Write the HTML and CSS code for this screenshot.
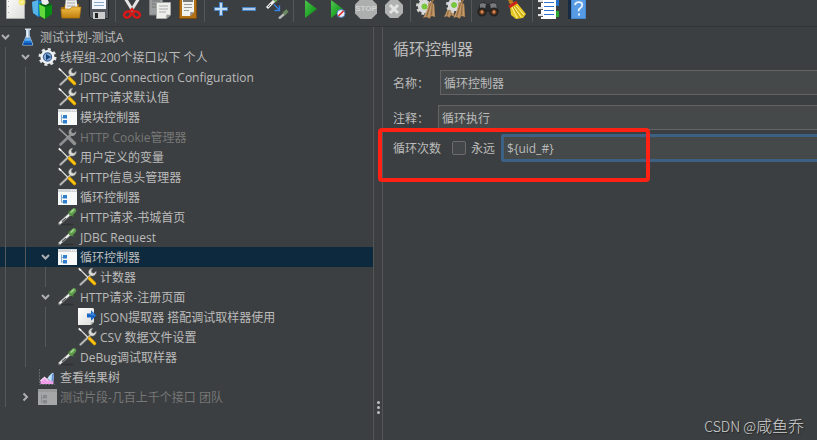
FILE: index.html
```html
<!DOCTYPE html>
<html lang="zh-CN">
<head>
<meta charset="utf-8">
<title>测试计划-测试A</title>
<link rel="stylesheet" href="styles.css">
</head>
<body>
<svg class="defs" aria-hidden="true">
  <defs>
    <linearGradient id="gGreen" x1="0" y1="0" x2="1" y2="1"><stop offset="0" stop-color="#4fc64f"/><stop offset="1" stop-color="#008a0c"/></linearGradient>
    <linearGradient id="gGold" x1="0" y1="0" x2="0" y2="1"><stop offset="0" stop-color="#f2c04a"/><stop offset="1" stop-color="#c07f0c"/></linearGradient>
    <linearGradient id="gPage" x1="0" y1="0" x2="1" y2="1"><stop offset="0" stop-color="#fff"/><stop offset="1" stop-color="#dcdcd8"/></linearGradient>
    <radialGradient id="gGlow"><stop offset="0" stop-color="#fffde0"/><stop offset=".4" stop-color="#f8e75a"/><stop offset="1" stop-color="#f8e75a" stop-opacity="0"/></radialGradient>
  </defs>
  <symbol id="tools" viewBox="0 0 20 20">
    <path d="M2.500 17.500 12 8.500" stroke="#66696b" stroke-width="3" stroke-linecap="round"/>
    <path d="M2.500 17.500 12 8.500" stroke="#c4c5c1" stroke-width="1.600" stroke-linecap="round"/>
    <path d="M14.800 1.200a4 4 0 0 0-3.900 5.600l2 2a4 4 0 0 0 5.300-4.500l-2.300 2-2.200-.6-.5-2.300z" fill="#dddeda" stroke="#8b8c88" stroke-width=".5"/>
    <path d="M2 2.400 10.500 11" stroke="#e0e0dc" stroke-width="1.200"/>
    <path d="M.8 1.400 3 3.600" stroke="#f3f3f0" stroke-width="1.800"/>
    <path d="m11.500 11.500 5 5" stroke="#c88c00" stroke-width="3.600" stroke-linecap="round"/>
    <path d="m11.500 11.500 5 5" stroke="#fcc713" stroke-width="2.400" stroke-linecap="round"/>
  </symbol>
  <symbol id="toolsOff" viewBox="0 0 20 20">
    <path d="M2.500 17.500 12 8.500" stroke="#8b8d8e" stroke-width="2.600" stroke-linecap="round"/>
    <path d="M14.800 1.200a4 4 0 0 0-3.900 5.600l2 2a4 4 0 0 0 5.300-4.500l-2.300 2-2.200-.6-.5-2.300z" fill="#989a9a"/>
    <path d="M1 1.600 11 11" stroke="#999b9b" stroke-width="1.600"/>
    <path d="m11.500 11.500 5 5" stroke="#8f9191" stroke-width="3.400" stroke-linecap="round"/>
  </symbol>
  <symbol id="ctl" viewBox="0 0 20 20">
    <path d="M0 2h19v16H0z" fill="#f8f9f9"/><path d="M0 2h19v3H0z" fill="#d3d6d8"/>
    <path d="M13 3h1v1h-1zM15 3h1v1h-1zM17 3h1v1h-1z" fill="#fff"/>
    <path d="M3.500 7.500v8M3.500 10.500h2M3.500 15h2" fill="none" stroke="#84a9c8"/>
    <path d="M5 8h4v3.500H5zM5 13h4v3.500H5z" fill="#2f7fd0"/>
  </symbol>
  <symbol id="ctlOff" viewBox="0 0 20 20">
    <path d="M0 2h19v16H0z" fill="#a5a6a7"/><path d="M0 2h19v3H0z" fill="#989a9b"/>
    <path d="M3.500 7.500v8M3.500 10.500h2M3.500 15h2" fill="none" stroke="#8a8c8d"/>
    <path d="M5 8h4v3.500H5zM5 13h4v3.500H5z" fill="#85888a"/>
  </symbol>
  <symbol id="dropper" viewBox="0 0 20 20">
    <ellipse cx="9" cy="17.500" rx="7" ry="1" fill="#303334"/>
    <path d="M1.500 16.500 12 7" stroke="#777a7b" stroke-width="3.200" stroke-linecap="round"/>
    <path d="M2 16 12 7" stroke="#f0f0ee" stroke-width="1.800" stroke-linecap="round"/>
    <path d="m4 14.800 4-3.700" stroke="#555859" stroke-width="1.200"/>
    <path d="m10.500 4.500 5 5" stroke="#3f6a35" stroke-width="1.800"/>
    <path d="m13 6.500 3-3" stroke="#5f9a4c" stroke-width="4.600" stroke-linecap="round"/>
    <path d="m13.300 5 2.200-2.200" stroke="#9dd088" stroke-width="1.800" stroke-linecap="round"/>
  </symbol>
  <symbol id="flask" viewBox="0 0 20 20">
    <path d="M8 2.500v6L4.300 17q-.5 1.600 1 1.600h8.800q1.500 0 1-1.600L11.800 8.500v-6z" fill="#a9c3da"/>
    <path d="M7.200 11.500 5 17q-.3 1 .6 1h8.200q.9 0 .6-1l-2.200-5.500z" fill="#176fd0"/>
    <path d="M7.500 12h4.800l.7 1.800H6.800z" fill="#69b5f5"/>
    <path d="M8.500 3H10v7H8.500z" fill="#edf5fb"/><path d="M7 1.500h6v1.500H7z" fill="#d2dde7"/>
    <path d="M5.500 16.300H14v1.200H5.500z" fill="#063f94"/>
  </symbol>
  <symbol id="gear" viewBox="0 0 20 20">
    <circle cx="9.500" cy="10" r="7.700" fill="none" stroke="#e5e7e8" stroke-width="2.600" stroke-dasharray="3 3.050"/>
    <circle cx="9.500" cy="10" r="5.900" fill="#35629b" stroke="#f0f1f2" stroke-width="2.400"/>
    <circle cx="9.500" cy="10" r="3.600" fill="#8dacd0"/>
    <path d="m8 7 5 3-5 3z" fill="#123f78"/>
  </symbol>
  <symbol id="extract" viewBox="0 0 20 20">
    <path d="M0 1h15l1 1v13l-3 3H0z" fill="url(#gPage)"/><path d="m12 18 1-3h3z" fill="#b4b4b0"/>
    <path d="M9 6.500h4V3.300L18.500 8.500 13 13.700v-3.200H9z" fill="#1766c5"/><path d="M9 7.200h5V5l3.200 3.500z" fill="#3f8fe5"/>
  </symbol>
  <symbol id="chart" viewBox="0 0 20 20">
    <path d="M1.500 2v15.500H17" fill="none" stroke="#65686a" stroke-dasharray="2 1"/>
    <path d="M2.500 17v-3.500l4-3 4 3.500 5-6V17z" fill="#ef9ee8"/>
    <path d="M2.500 14l4-3.500 4 3.500" fill="none" stroke="#fbd3f6" stroke-width="1.500"/>
    <path d="M9 12q1.500-3 4-5t2.500-.500V12q-.500 4-3 1.500z" fill="#bfe0f8"/><path d="M14 7q1.500-1 1.500 0v6l-2 2z" fill="#5c8ed2"/>
  </symbol>
  <symbol id="down" viewBox="0 0 12 12"><path d="m2 4 3.500 3.500L9 4" fill="none" stroke="#adafb0" stroke-width="2"/></symbol>
  <symbol id="right" viewBox="0 0 12 12"><path d="m3.500 2.500 3.500 3.500-3.500 3.500" fill="none" stroke="#adafb0" stroke-width="2"/></symbol>
  <symbol id="broom" viewBox="0 0 16 24">
    <path d="m10 7 4-7" stroke="#9f7444" stroke-width="2"/>
    <path d="M7 6l6 2 1 14-4-1-2 3-3-2-4 1q5-7 6-17z" fill="#b18758"/>
    <path d="M8 8 3 22M10 9 7 22M12 9v12" stroke="#d0aa7c" stroke-width=".800"/>
    <path d="M9 8 5 21M11 9l-1 11" stroke="#80592f" stroke-width=".700"/>
  </symbol>
  <symbol id="cog" viewBox="0 0 20 20">
    <circle cx="10" cy="10" r="7.500" fill="none" stroke="#d4d5d5" stroke-width="3" stroke-dasharray="3 2.900"/>
    <circle cx="10" cy="10" r="5" fill="#63b52c" stroke="#d9dada" stroke-width="4"/>
    <circle cx="10" cy="10" r="2.800" fill="#75c93a"/>
  </symbol>
</svg>

<main class="app">
  <header class="toolbar" role="toolbar" aria-label="工具栏">
    <div class="group">
      <button aria-label="新建"><svg viewBox="0 0 24 24"><path d="M3.500 0h18v23.500h-18z" fill="url(#gPage)" stroke="#aaa"/><path d="M5 6h1v1H5zM5 11h1v1H5zM5 17h1v1H5z" fill="#aaa"/><circle cx="19" cy="7" r="4.500" fill="url(#gGlow)"/></svg></button>
      <button aria-label="模板"><svg viewBox="0 0 24 24"><path d="m1 7 6-2 5 2v13l-5 2-5-4z" fill="#1683cc"/><path d="m1 7 6-2v16l-5-3z" fill="#58b4e8"/><path d="m8 9 7-3 6 4v9l-7 5-5-3z" fill="#078d13"/><path d="m8 9 6 3v12l-5-3z" fill="#64db3c"/><path d="m8 9 7-3 6 4-7 2z" fill="#0b5f16"/><path d="M9 0h6l3 8-3 2-4-1z" fill="#eee"/></svg></button>
      <button aria-label="打开"><svg viewBox="0 0 24 24"><path d="M2 12h3l1-3h14v13H3z" fill="#a86c0a"/><path d="m7 0 10 1 2 14H6z" fill="#eee"/><path d="M8 5h8M8 8h8M8 11h8" stroke="#a5a5a5"/><path d="M2 14h9l2-2h9l-1.500 11H3z" fill="url(#gGold)" stroke="#b4780b" stroke-width=".7"/></svg></button>
      <button aria-label="保存"><svg viewBox="0 0 24 24"><path d="M2.500 0h19v23.500H4.500l-2-2z" fill="#555a60" stroke="#26292c"/><path d="M5 0h14v14H5z" fill="#f3f7fb"/><path d="M7 7.500h10M7 10.500h10" stroke="#8aaacc"/><path d="M6 17h12v7H6z" fill="#c9cbcd"/><path d="M8 18h3v5H8z" fill="#222"/></svg></button>
    </div>
    <div class="group">
      <button aria-label="剪切"><svg viewBox="0 0 24 24"><path d="m5 3 8 13M19 3l-8 13" stroke="#e4e4e4" stroke-width="3"/><path d="m12 12 1.500 3" stroke="#888"/><ellipse cx="7.500" cy="19.500" rx="3.500" ry="2.800" fill="none" stroke="#df1717" stroke-width="2.400" transform="rotate(-30 7.500 19.500)"/><ellipse cx="16.500" cy="19.500" rx="3.500" ry="2.800" fill="none" stroke="#df1717" stroke-width="2.400" transform="rotate(30 16.500 19.500)"/><path d="m9 17 3-3 3 3" fill="none" stroke="#df1717" stroke-width="2"/></svg></button>
      <button aria-label="复制"><svg viewBox="0 0 24 24"><path d="M1.500 0h13v20h-13z" fill="#9b9d9e" stroke="#7b7d7e"/><path d="M4 6h8M4 9h5M4 12h4" stroke="#737576"/><path d="M8.500 7.500h14V20l-4 3.500h-10z" fill="#eeeeeb" stroke="#aaa"/><path d="M11 11h9M11 14h9M11 17h7" stroke="#aaa"/><path d="m18 23.500.5-4 4 .5z" fill="#9a9a96"/></svg></button>
      <button aria-label="粘贴"><svg viewBox="0 0 24 24"><path d="M3.500 1h17v22.500h-17z" fill="#b27015" stroke="#794a0b"/><path d="M6 3h12v14l-4 4H6z" fill="#f1f1ee"/><path d="M8 9.500h8M8 12.500h8M8 15.500h5" stroke="#999"/><path d="m14 21 .500-4 3.500.500z" fill="#888"/><path d="M7 2h10v5H7z" fill="#777"/></svg></button>
    </div>
    <div class="group">
      <button aria-label="展开"><svg viewBox="0 0 24 24"><path d="M10.500 7.500h3v5h5v3h-5v5h-3v-5h-5v-3h5z" fill="#c3dcf5" stroke="#4a86c8"/></svg></button>
      <button aria-label="折叠"><svg viewBox="0 0 24 24"><path d="M5.500 12.500h13v3h-13z" fill="#b0cbea" stroke="#4a86c8"/></svg></button>
      <button aria-label="切换"><svg viewBox="0 0 24 24"><path d="m2 13 9-9" stroke="#eee" stroke-width="3"/><path d="m3 12 3-3" stroke="#555"/><path d="m9 6 3-3" stroke="#70a85c" stroke-width="4"/><path d="m14 23.500 7-6" stroke="#b8bab8" stroke-width="2.400"/><path d="m18.500 19 4-3.500" stroke="#6a895f" stroke-width="3.400"/><path d="m9 9.500 5 5m.500-4v5h-5" fill="none" stroke="#3284e8" stroke-width="1.300"/></svg></button>
    </div>
    <div class="group">
      <button aria-label="启动"><svg viewBox="0 0 24 24"><path d="m7 5 12 9L7 23z" fill="url(#gGreen)"/></svg></button>
      <button aria-label="不停顿启动"><svg viewBox="0 0 24 24"><path d="m5 5 12 9L5 23z" fill="url(#gGreen)"/><circle cx="15" cy="18.500" r="4" fill="#e9eef7" stroke="#4b78b8"/><path d="m12.500 21 5-5" stroke="#e02828" stroke-width="1.600"/></svg></button>
      <button aria-label="停止" disabled><svg viewBox="0 0 24 24"><path d="M7 3.500h10l6 6v9l-6 6H7l-6-6v-9z" fill="#adaeae"/><text x="12" y="16" text-anchor="middle" class="stop-label">STOP</text></svg></button>
      <button aria-label="关闭" disabled><svg viewBox="0 0 24 24"><path d="M8 5h8l5 5v8l-5 5H8l-5-5v-8z" fill="#b0b1b1"/><path d="m8 10 8 8m0-8-8 8" stroke="#e3e3e3" stroke-width="3"/></svg></button>
    </div>
    <div class="group">
      <button aria-label="清除"><svg viewBox="0 0 24 24"><use href="#cog" x="0" y="2" width="19" height="19"/><use href="#broom" x="7" y="1" width="15" height="23"/></svg></button>
      <button aria-label="清除全部"><svg viewBox="0 0 24 24"><use href="#broom" x="0" y="2" width="13" height="22"/><use href="#cog" x="2" y="1" width="18" height="18"/><use href="#broom" x="9" y="1" width="15" height="23"/></svg></button>
    </div>
    <div class="group">
      <button aria-label="搜索"><svg viewBox="0 0 24 24"><path d="M4 9q4-4 7 0h2q4-4 7 0l3 8H1z" fill="#292a2b"/><path d="m4 9 3-1 3 1-1 5H4zM14 9l3-1 3 1 1 5h-6z" fill="#77797b"/><circle cx="6" cy="17" r="3.600" fill="#76401f" stroke="#222" stroke-width="2"/><circle cx="18" cy="17" r="3.600" fill="#76401f" stroke="#222" stroke-width="2"/><circle cx="6" cy="17" r="1.400" fill="#d98c57"/><circle cx="18" cy="17" r="1.400" fill="#d98c57"/></svg></button>
      <button aria-label="重置搜索"><svg viewBox="0 0 24 24"><path d="M4 0 8 9" stroke="#b77a20" stroke-width="4"/><path d="m6 12 7-4 9 11-3 4-7 1-5-4z" fill="#e9ca24"/><path d="m8 12 5 11M10 12l7 10M12 11l8 9" stroke="#fff09a"/><path d="m9 12 7 11M11 11l8 10" stroke="#aa8404" stroke-width=".7"/><path d="m5 12 8-5" stroke="#cc2419" stroke-width="3"/></svg></button>
    </div>
    <div class="group">
      <button aria-label="函数助手"><svg viewBox="0 0 24 24"><path d="M18 4h4v7h-4z" fill="#246fc9"/><path d="M18 16h4v6h-4z" fill="#2da832"/><path d="M4 0h15v24H4z" fill="#fff"/><path d="M7 7.500h10M7 11.500h10M7 15.500h10M7 19.500h10" stroke="#2f71d4"/><path d="M1 6.500h5M1 13.500h5M1 20.500h5" stroke="#555" stroke-width="3"/><path d="M1 6h5M1 13h5M1 20h5" stroke="#e2e2e2" stroke-width="2"/></svg></button>
      <button aria-label="帮助"><svg viewBox="0 0 24 24"><path d="M3 1h4v23H3z" fill="#162b42"/><path d="M6 0h15v24H6z" fill="#4587cf"/><path d="M7 0h13v23H7z" fill="#579be4"/><path d="M10 10q.5-3 4-2.800T17.200 10q0 2-2 3.200t-1.400 3" fill="none" stroke="#e8f3fd" stroke-width="1.800"/><path d="M13 18.500h2v2h-2z" fill="#e8f3fd"/></svg></button>
    </div>
  </header>

  <div class="split">
    <nav class="tree-pane" aria-label="测试计划">
      <ul class="tree" role="tree">
        <li class="row" role="treeitem" aria-level="1" aria-expanded="true"><svg class="chev"><use href="#down"/></svg><svg class="icon"><use href="#flask"/></svg><span class="label">测试计划-测试A</span></li>
        <li class="row" role="treeitem" aria-level="2" aria-expanded="true"><svg class="chev"><use href="#down"/></svg><svg class="icon"><use href="#gear"/></svg><span class="label">线程组-200个接口以下 个人</span></li>
        <li class="row" role="treeitem" aria-level="3"><span class="chev"></span><svg class="icon"><use href="#tools"/></svg><span class="label">JDBC Connection Configuration</span></li>
        <li class="row" role="treeitem" aria-level="3"><span class="chev"></span><svg class="icon"><use href="#tools"/></svg><span class="label">HTTP请求默认值</span></li>
        <li class="row" role="treeitem" aria-level="3"><span class="chev"></span><svg class="icon"><use href="#ctl"/></svg><span class="label">模块控制器</span></li>
        <li class="row off" role="treeitem" aria-level="3" aria-disabled="true"><span class="chev"></span><svg class="icon"><use href="#toolsOff"/></svg><span class="label">HTTP Cookie管理器</span></li>
        <li class="row" role="treeitem" aria-level="3"><span class="chev"></span><svg class="icon"><use href="#tools"/></svg><span class="label">用户定义的变量</span></li>
        <li class="row" role="treeitem" aria-level="3"><span class="chev"></span><svg class="icon"><use href="#tools"/></svg><span class="label">HTTP信息头管理器</span></li>
        <li class="row" role="treeitem" aria-level="3"><span class="chev"></span><svg class="icon"><use href="#ctl"/></svg><span class="label">循环控制器</span></li>
        <li class="row" role="treeitem" aria-level="3"><span class="chev"></span><svg class="icon"><use href="#dropper"/></svg><span class="label">HTTP请求-书城首页</span></li>
        <li class="row" role="treeitem" aria-level="3"><span class="chev"></span><svg class="icon"><use href="#dropper"/></svg><span class="label">JDBC Request</span></li>
        <li class="row selected" role="treeitem" aria-level="3" aria-expanded="true" aria-selected="true"><svg class="chev"><use href="#down"/></svg><svg class="icon"><use href="#ctl"/></svg><span class="label">循环控制器</span></li>
        <li class="row" role="treeitem" aria-level="4"><span class="chev"></span><svg class="icon"><use href="#tools"/></svg><span class="label">计数器</span></li>
        <li class="row" role="treeitem" aria-level="3" aria-expanded="true"><svg class="chev"><use href="#down"/></svg><svg class="icon"><use href="#dropper"/></svg><span class="label">HTTP请求-注册页面</span></li>
        <li class="row" role="treeitem" aria-level="4"><span class="chev"></span><svg class="icon"><use href="#extract"/></svg><span class="label">JSON提取器 搭配调试取样器使用</span></li>
        <li class="row" role="treeitem" aria-level="4"><span class="chev"></span><svg class="icon"><use href="#tools"/></svg><span class="label">CSV 数据文件设置</span></li>
        <li class="row" role="treeitem" aria-level="3"><span class="chev"></span><svg class="icon"><use href="#dropper"/></svg><span class="label">DeBug调试取样器</span></li>
        <li class="row" role="treeitem" aria-level="2"><span class="chev"></span><svg class="icon"><use href="#chart"/></svg><span class="label">查看结果树</span></li>
        <li class="row off" role="treeitem" aria-level="2" aria-expanded="false"><svg class="chev"><use href="#right"/></svg><svg class="icon"><use href="#ctlOff"/></svg><span class="label">测试片段-几百上千个接口 团队</span></li>
      </ul>
    </nav>
    <div class="divider" role="separator" aria-orientation="vertical"><i></i><i></i><i></i></div>
    <section class="editor">
      <h1>循环控制器</h1>
      <div class="field name"><label for="name">名称：</label><input id="name" type="text" value="循环控制器"></div>
      <div class="field comment"><label for="comment">注释：</label><input id="comment" type="text" value="循环执行"></div>
      <div class="field loops"><label for="loops">循环次数</label><input id="forever" type="checkbox"><label for="forever">永远</label><input id="loops" class="focused" type="text" value="${uid_#}"></div>
      <div class="highlight"></div>
      <p class="watermark"><span>CSDN @</span>咸鱼乔</p>
    </section>
  </div>
</main>
</body>
</html>
```
FILE: styles.css
```css
* { box-sizing: border-box; }

body {
  margin: 0;
  background: #3c3f41;
  color: #bbb;
  font: 12px/20px "Open Sans", "Noto Sans CJK SC", sans-serif;
}

.defs { position: absolute; width: 0; height: 0; }

.app {
  display: flex;
  flex-direction: column;
  min-height: 100vh;
}

.toolbar {
  display: flex;
  height: 27px;
  padding-left: 1px;
  overflow: hidden;
  border-bottom: 1px solid #323436;
}

.group { display: flex; }

.group + .group {
  padding-left: 5px;
  background: linear-gradient(#55585a, #55585a) 2px 0 / 1px 22px no-repeat;
}

.toolbar button {
  width: 28px;
  height: 24px;
  margin-top: -5px;
  padding: 0 2px;
  border: 0;
  background: none;
}

.toolbar svg { display: block; width: 24px; height: 24px; fill: none; }

.stop-label { fill: #d2d2d2; font: bold 8px "Liberation Sans", sans-serif; }

.split { display: flex; flex: 1; }

.tree-pane { flex: 0 0 373px; overflow: hidden; }

.tree { margin: 0; padding: 0; list-style: none; }

.row {
  display: flex;
  align-items: center;
  height: 20px;
  white-space: pre;
}

.row::before {
  content: "";
  align-self: stretch;
  background: repeating-linear-gradient(90deg, transparent 0 5px, #55585a 5px 6px, transparent 6px 20px);
}

.row[aria-level="2"]::before { width: 20px; }
.row[aria-level="3"]::before { width: 40px; }
.row[aria-level="4"]::before { width: 60px; }

.label, .field label { padding-top: 2px; }

.selected { background-color: #0d293e; }
.off { color: #777; }

.chev { flex: none; width: 12px; height: 12px; margin-right: 6px; }
.icon { flex: none; width: 20px; height: 20px; margin-right: 2px; fill: none; }

.divider {
  display: flex;
  flex: 0 0 10px;
  flex-direction: column;
  align-items: center;
  justify-content: flex-end;
  gap: 2px;
  padding-bottom: 26px;
  border: solid #555;
  border-width: 0 1px;
}

.divider i { width: 3px; height: 3px; border-radius: 50%; background: #c0c0c0; }

.editor { position: relative; flex: 1; min-width: 0; padding: 12px 0 0 10px; }

h1 { margin: 0 0 11px; font-size: 16px; font-weight: 400; line-height: 20px; }

.field { display: flex; align-items: center; }
.field label { flex: none; }

.field input[type="text"] {
  flex: 1;
  min-width: 0;
  height: 25px;
  padding: 0 3px;
  border: 1px solid #646464;
  border-right: 0;
  background: #45494a;
  color: #bbb;
  font: inherit;
  outline: 0;
}

.name label { width: 47px; }
.comment label { width: 45px; }
.comment { margin-top: 10px; }
.loops { margin-top: 4px; }

.field input.focused {
  height: 28px;
  margin-left: 6px;
  border: 3px solid #3d6185;
  border-right: 0;
  border-radius: 3px 0 0 3px;
}

.field input[type="checkbox"] {
  width: 14px;
  height: 14px;
  margin: 0 5px 0 11px;
  appearance: none;
  border: 1px solid #6b6b6b;
  border-radius: 2px;
  background: #43474a;
}

.highlight {
  position: absolute;
  top: 101px;
  left: -5px;
  width: 272px;
  height: 54px;
  border: 4px solid #ff2214;
  border-radius: 4px;
}

.watermark {
  position: absolute;
  right: 13px;
  bottom: 4px;
  margin: 0;
  color: #d0d1d1;
  font: 300 16px/20px "Noto Sans CJK SC", sans-serif;
  text-shadow: 1px 1px 1px #222;
}

.watermark span { font-size: 14px; }
```
